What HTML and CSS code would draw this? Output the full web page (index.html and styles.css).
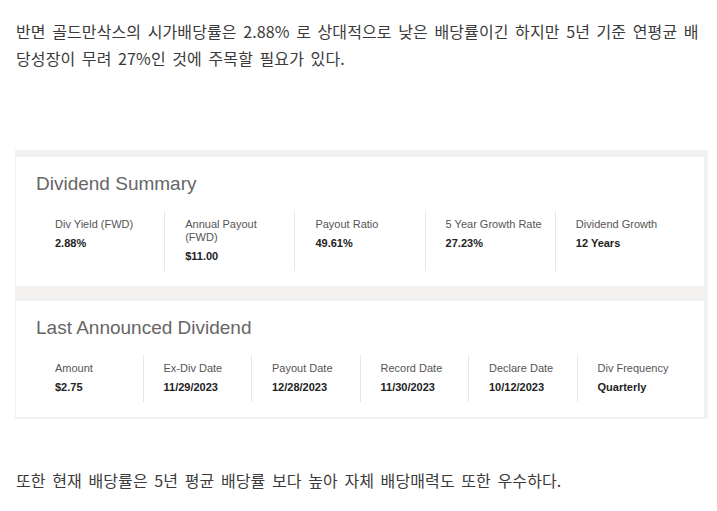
FILE: index.html
```html
<!DOCTYPE html>
<html lang="ko">
<head>
<meta charset="utf-8">
<link rel="stylesheet" href="styles.css">
</head>
<body>
<div class="page">
  <p class="text">반면 골드만삭스의 시가배당률은 2.88% 로 상대적으로 낮은 배당률이긴 하지만 5년 기준 연평균 배당성장이 무려 27%인 것에 주목할 필요가 있다.</p>

  <div class="summary">
    <section class="card">
      <h2 class="card-title">Dividend Summary</h2>
      <div class="cols">
        <div class="col"><div class="label">Div Yield (FWD)</div><div class="value">2.88%</div></div>
        <div class="col"><div class="label">Annual Payout (FWD)</div><div class="value">$11.00</div></div>
        <div class="col"><div class="label">Payout Ratio</div><div class="value">49.61%</div></div>
        <div class="col"><div class="label">5 Year Growth Rate</div><div class="value">27.23%</div></div>
        <div class="col"><div class="label">Dividend Growth</div><div class="value">12 Years</div></div>
      </div>
    </section>
    <section class="card">
      <h2 class="card-title">Last Announced Dividend</h2>
      <div class="cols">
        <div class="col"><div class="label">Amount</div><div class="value">$2.75</div></div>
        <div class="col"><div class="label">Ex-Div Date</div><div class="value">11/29/2023</div></div>
        <div class="col"><div class="label">Payout Date</div><div class="value">12/28/2023</div></div>
        <div class="col"><div class="label">Record Date</div><div class="value">11/30/2023</div></div>
        <div class="col"><div class="label">Declare Date</div><div class="value">10/12/2023</div></div>
        <div class="col"><div class="label">Div Frequency</div><div class="value">Quarterly</div></div>
      </div>
    </section>
  </div>

  <p class="text text-after">또한 현재 배당률은 5년 평균 배당률 보다 높아 자체 배당매력도 또한 우수하다.</p>
</div>
</body>
</html>
```

FILE: styles.css
```css
html, body {
  margin: 0;
  padding: 0;
  background: #fff;
}

.page {
  padding: 18px 9px 0 15px;
}

.text {
  margin: 0;
  padding-left: 1px;
  font-family: "Noto Sans CJK KR", "Noto Sans", sans-serif;
  font-size: 16px;
  line-height: 27px;
  letter-spacing: 0.1px;
  word-spacing: 2px;
  color: #3a3a3a;
}

.text-after {
  margin-top: 48px;
}

.summary {
  margin-top: 78px;
  background: #f2f1ef;
  padding: 7px 4px 2px 1px;
}

.card {
  background: #fff;
  padding: 16px 19px 15px;
  font-family: "Liberation Sans", Arial, sans-serif;
}

.card + .card {
  margin-top: 15px;
}

.card-title {
  margin: 0 0 16px 1px;
  font-size: 19px;
  line-height: 22px;
  font-weight: 400;
  color: #666;
}

.cols {
  display: flex;
}

.col {
  flex: 1 1 0;
  min-width: 0;
  padding: 7px 10px 8px 20px;
}

.col + .col {
  border-left: 1px solid #e6e6e6;
}

.label {
  font-size: 11px;
  line-height: 13px;
  color: #555;
  margin-bottom: 6px;
}

.value {
  font-size: 11px;
  line-height: 13px;
  font-weight: 700;
  color: #222;
}
```
